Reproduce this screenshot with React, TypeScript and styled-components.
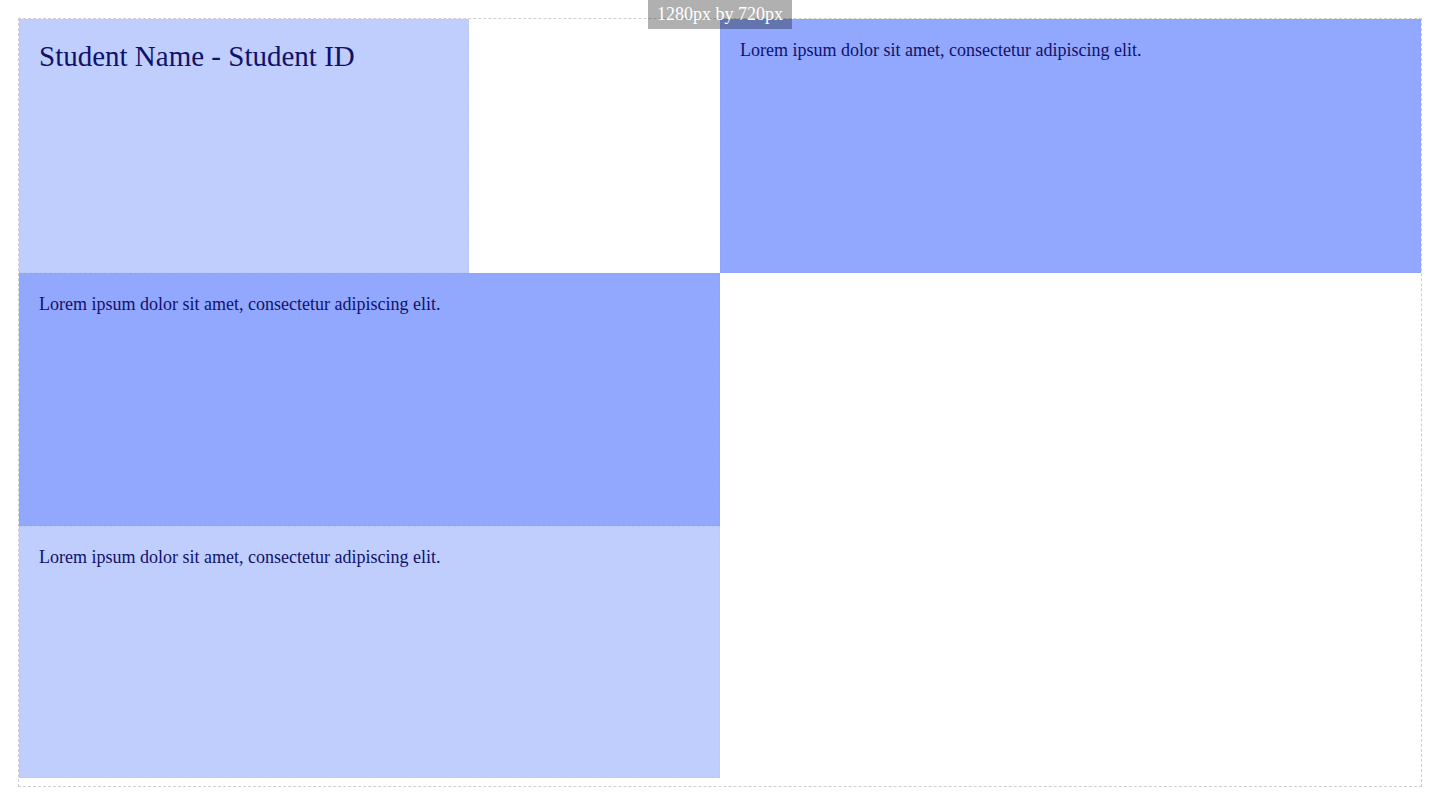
import React from 'react';
import styled, { createGlobalStyle } from 'styled-components';

const GlobalStyle = createGlobalStyle`
  html, body {
    margin: 0;
    padding: 0;
    background: #ffffff;
  }
  body {
    font-family: "Liberation Serif", "Times New Roman", serif;
  }
`;

const Page = styled.div`
  position: relative;
  width: 1440px;
  height: 810px;
  padding: 18px;
  box-sizing: border-box;
`;

const SizeTag = styled.div`
  position: absolute;
  top: 0;
  left: 648px;
  z-index: 2;
  height: 29px;
  padding: 0 9px;
  display: flex;
  align-items: center;
  background: rgba(0, 0, 0, 0.31);
  color: #ffffff;
  font-size: 18px;
`;

const Canvas = styled.div`
  box-sizing: border-box;
  width: 1404px;
  height: 769px;
  border: 1px dashed #cfcfcf;
  display: grid;
  grid-template-columns: 701px 701px;
  grid-template-rows: 254px 253px 252px;
  align-content: start;
`;

const Cell = styled.div<{ $tone: 'light' | 'mid'; $width?: number; $col: number; $row: number }>`
  grid-column: ${(p) => p.$col};
  grid-row: ${(p) => p.$row};
  width: ${(p) => (p.$width ? `${p.$width}px` : 'auto')};
  background: ${(p) => (p.$tone === 'light' ? '#bfcefd' : '#92a8fe')};
  outline: 1px dashed rgba(0, 0, 0, 0.025);
  outline-offset: -1px;
  padding: 20px;
  box-sizing: border-box;
  color: #11116a;
`;

const Title = styled.h1`
  margin: 0;
  font-size: 29px;
  font-weight: normal;
  line-height: 34px;
`;

const Text = styled.p`
  margin: 0;
  font-size: 18px;
  line-height: 22px;
`;

const lorem = 'Lorem ipsum dolor sit amet, consectetur adipiscing elit.';

export default function App() {
  return (
    <>
      <GlobalStyle />
      <Page>
        <SizeTag>1280px by 720px</SizeTag>
        <Canvas>
          <Cell $tone="light" $col={1} $row={1} $width={450}>
            <Title>Student Name - Student ID</Title>
          </Cell>
          <Cell $tone="mid" $col={2} $row={1}>
            <Text>{lorem}</Text>
          </Cell>
          <Cell $tone="mid" $col={1} $row={2}>
            <Text>{lorem}</Text>
          </Cell>
          <Cell $tone="light" $col={1} $row={3}>
            <Text>{lorem}</Text>
          </Cell>
        </Canvas>
      </Page>
    </>
  );
}
